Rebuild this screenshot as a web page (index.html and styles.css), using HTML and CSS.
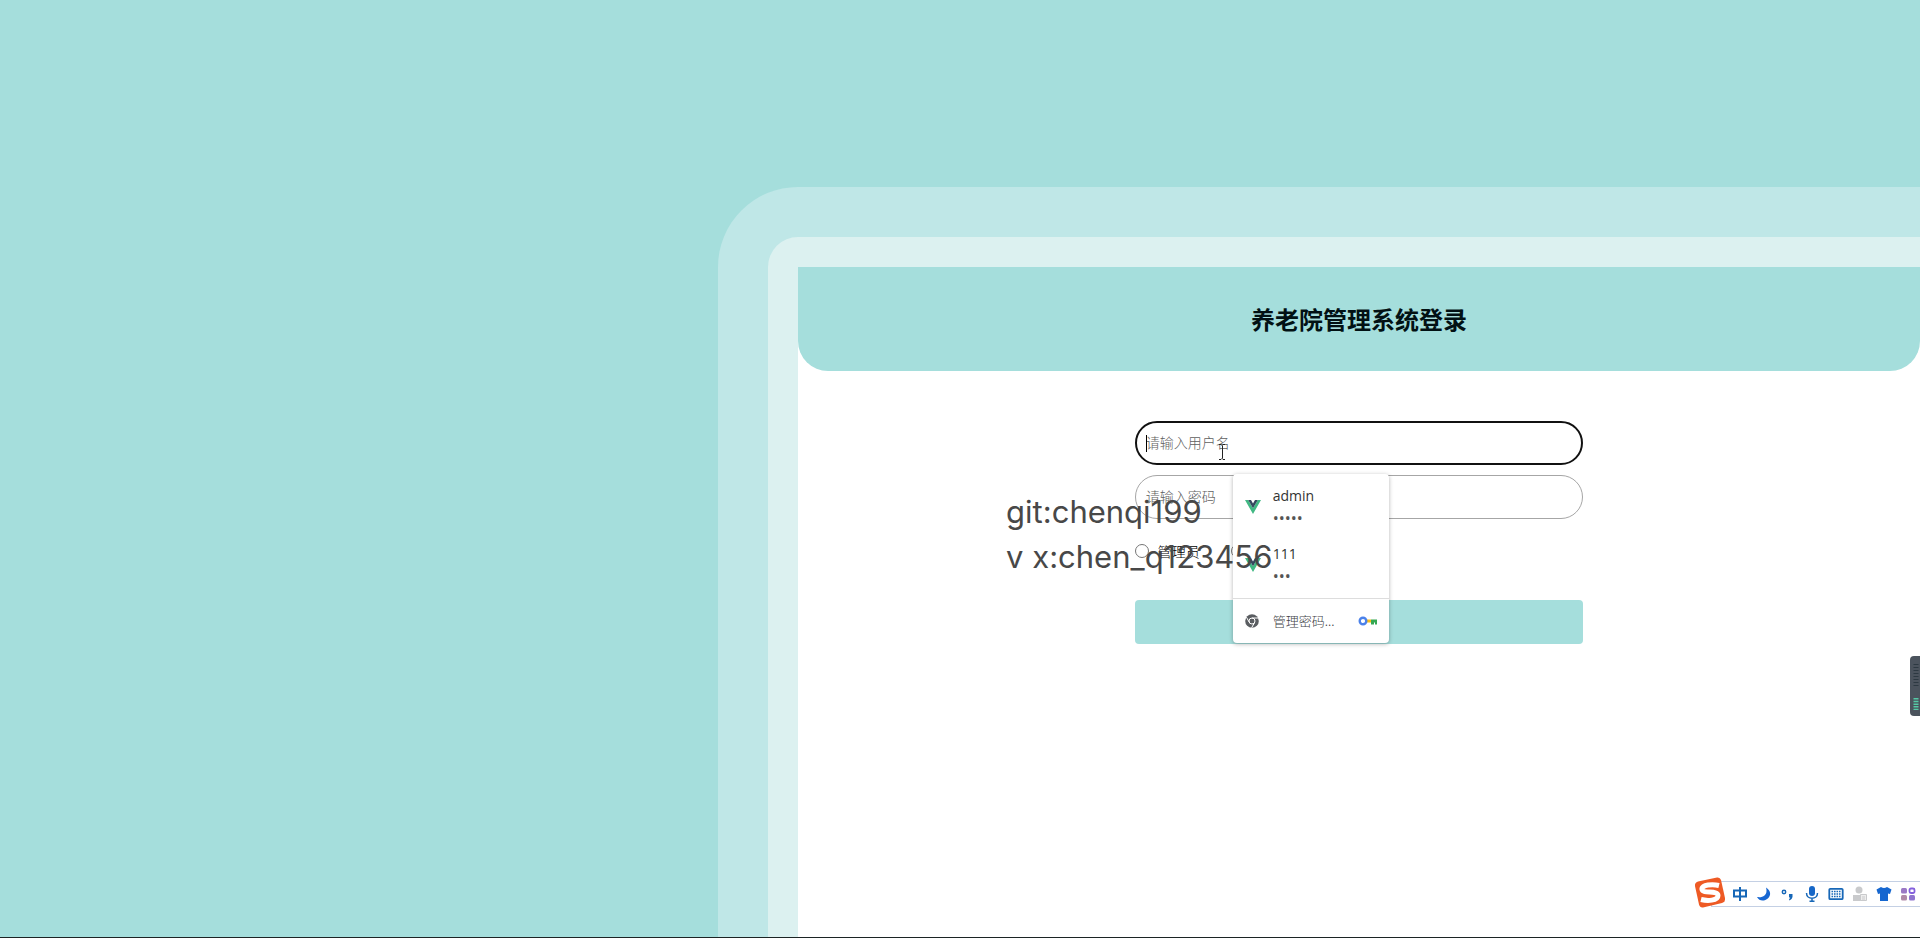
FILE: index.html
```html
<!DOCTYPE html>
<html lang="zh-CN">
<head>
<meta charset="utf-8">
<title>养老院管理系统登录</title>
<link rel="stylesheet" href="styles.css">
</head>
<body>
<main class="page">
  <div class="frame">
    <div class="bezel">
      <section class="panel">
        <header class="panel-header"><h1 class="title">养老院管理系统登录</h1></header>
        <form class="login">
          <div class="field">
            <input class="text-input text-input-active" type="text" placeholder="请输入用户名" aria-label="请输入用户名">
            <span class="caret"></span>
            <svg class="pointer" width="8" height="16" viewBox="0 0 8 16" fill="none" stroke="#222"><path d="M1 .5h2l1 1 1-1h2M4.500 1.500v13M1 15.500h2l1-1 1 1h2"/></svg>
            <div class="suggestions">
              <button class="account" type="button">
                <svg class="vue" width="16" height="14" viewBox="0 0 16 14"><path fill="#41b883" d="M0 0h3.200L8 8.300 12.800 0H16L8 14z"/><path fill="#35495e" d="M3.200 0H6l2 3.500L10 0h2.800L8 8.300z"/></svg>
                <span class="account-text"><span>admin</span><span class="dots">•••••</span></span>
              </button>
              <button class="account" type="button">
                <svg class="vue" width="16" height="14" viewBox="0 0 16 14"><path fill="#41b883" d="M0 0h3.200L8 8.300 12.800 0H16L8 14z"/><path fill="#35495e" d="M3.200 0H6l2 3.500L10 0h2.800L8 8.300z"/></svg>
                <span class="account-text"><span>111</span><span class="dots">•••</span></span>
              </button>
              <button class="manage" type="button">
                <svg width="14" height="14" viewBox="0 0 14 14"><circle cx="7" cy="7" r="6.800" fill="#5a5d61"/><g fill="none" stroke="#fff"><circle cx="7" cy="7" r="3"/><path d="M7 4h6M4.400 8.500l-3-5.300M9.600 8.500l-3 5.300"/></g></svg>
                <span class="manage-label">管理密码...</span>
                <svg width="19" height="10" viewBox="0 0 19 10"><path fill="#f9bc15" d="M8 3.500h5v3H8z"/><path fill="#34a853" d="M13 3.500h6v5h-2v-2h-1v2h-3z"/><circle cx="5" cy="5" r="3.300" fill="#fff" stroke="#4c82ea" stroke-width="2.400"/></svg>
              </button>
            </div>
          </div>
          <div class="field">
            <input class="text-input" type="password" placeholder="请输入密码" aria-label="请输入密码">
          </div>
          <div class="roles">
            <label class="role"><input class="radio" type="radio" name="role"><span>管理员</span></label>
            <input class="radio" type="radio" name="role">
          </div>
          <button class="submit" type="button"></button>
        </form>
        <p class="watermark"><span>git:chenqi199</span><span>v x:chen_q123456</span></p>
      </section>
    </div>
  </div>
</main>
<div class="edge-line"></div>
<div class="meter">
  <svg width="10" height="60" viewBox="0 0 10 60"><path d="M6 8v24" stroke="#2d3942" stroke-width="5" stroke-dasharray="1 2"/><path d="M6 42v12" stroke="#55c9a5" stroke-width="5" stroke-dasharray="1.500 1.200"/></svg>
</div>
<div class="ime">
  <svg class="ime-logo" width="32" height="32" viewBox="0 0 32 32"><path fill="#ee5a24" d="M4 4.500 23 .5q3-.5 4 2.500l4 18q.5 4-3 5L9 30.500q-3 .5-4-3L1 9q-.5-3.500 3-4.500z"/><path d="M25 8.500C19 7 7 7.500 8 12.500c1 4.500 16 .5 16 6 0 5.500-11 5.500-17 4" fill="none" stroke="#fff" stroke-width="5"/></svg>
  <div class="ime-tools">
    <svg viewBox="0 0 16 16"><path d="M2 4.500h12v6H2zM8 1v14" fill="none" stroke="#1667b7" stroke-width="2"/></svg>
    <svg viewBox="0 0 16 16"><path fill="#1767d2" d="M10 1.500c8 5 3 13-3.500 13Q3 14.500 1 11c7 1 11-3 9-9.500z"/></svg>
    <svg viewBox="0 0 16 16"><circle cx="4" cy="6" r="1.700" fill="none" stroke="#1767b7" stroke-width="1.500"/><path fill="#1767b7" d="M9 8h3.500v3q-.5 2.500-3 3.500l-.5-1 1.300-2H9z"/></svg>
    <svg viewBox="0 0 16 16"><rect x="5" y="0" width="6" height="10" rx="3" fill="#1767c7"/><path d="M2.500 7c0 7 11 7 11 0M8 12v4M5.500 15.300h5" fill="none" stroke="#1767b7" stroke-width="1.500"/></svg>
    <svg viewBox="0 0 16 16"><rect x="1.300" y="2.800" width="13.400" height="10.400" rx="1" fill="none" stroke="#1767b7" stroke-width="1.800"/><path d="M3.500 5.500h9M3.500 8h9M3.500 10.500h9" stroke="#1767b7" stroke-width="1.600" stroke-dasharray="1.600 .9"/></svg>
    <svg viewBox="0 0 16 16" fill="#c9cacc"><circle cx="7" cy="4" r="3.500"/><path d="M1 9h13v6H1z"/><path d="M8.500 8.500h6v6h-6z" fill="#eee" stroke="#c9cacc"/><path d="M10 10.500h3v1h-3zM10 12.500h3v1h-3z"/></svg>
    <svg viewBox="0 0 16 16"><path fill="#1667d0" d="M5 1q3 2 6 0l4.500 2.500L14 8l-2-.5V15H4V7.500L2 8 .5 3.500z"/></svg>
    <svg viewBox="0 0 16 16"><rect x="1" y="2" width="6" height="5.500" rx="1.500" fill="#9a78c5"/><rect x="9.500" y="2.500" width="5" height="4.500" rx="1.500" fill="none" stroke="#8460dd" stroke-width="1.800"/><rect x="1" y="9" width="6" height="5.500" rx="1.500" fill="#b08aa8"/><rect x="9" y="9" width="6" height="5.500" rx="1.500" fill="#8f74cf"/></svg>
  </div>
</div>
</body>
</html>
```
FILE: styles.css
```css
* { box-sizing: border-box; }
body {
  margin: 0;
  min-height: 100vh;
  display: flex;
  flex-direction: column;
  overflow-x: hidden;
  background: #a5dedc;
  font-family: "Open Sans", "Noto Sans CJK SC", sans-serif;
  font-size: 14px;
}
.page { flex: 1; display: flex; padding: 187px 0 0 37.4vw; }
.frame { flex: 1; display: flex; padding: 50px 0 0 50px; background: #bfe7e7; border-radius: 80px 0 0 0; }
.bezel { flex: 1; display: flex; padding: 30px 0 0 30px; background: #dcf1f0; border-radius: 30px 0 0 0; }
.panel { position: relative; flex: 1; background: #fff; }
.panel-header {
  display: flex;
  align-items: center;
  justify-content: center;
  height: 104px;
  background: #a5dedc;
  border-radius: 0 0 30px 30px;
}
.title { margin: 0; font: bold 24px/32px "Noto Sans CJK SC", sans-serif; color: #021114; }
.login { display: flex; flex-direction: column; width: 40%; margin: 50px auto 0; }
.field { position: relative; display: flex; margin-bottom: 10px; }
.text-input {
  width: 100%;
  height: 44px;
  padding: 0 10px 2px;
  border: 1px solid #a6a6a6;
  border-radius: 22px;
  background: #fff;
  font: 300 14px/20px "Noto Sans CJK SC", sans-serif;
  outline: none;
}
.text-input-active { border: 2px solid #111; padding: 0 9px 2px; }
.text-input::placeholder { color: #606060; opacity: 1; }
.caret { position: absolute; left: 11px; top: 14px; width: 1px; height: 17px; background: #000; }
.pointer { position: absolute; left: 83px; top: 23px; z-index: 3; }
.suggestions {
  position: absolute;
  z-index: 2;
  left: 98px;
  top: 53px;
  width: 156px;
  background: #fff;
  border-radius: 4px;
  box-shadow: 0 1px 4px rgba(0, 0, 0, .3);
}
.account, .manage {
  display: flex;
  align-items: center;
  width: 100%;
  padding: 0 12px;
  border: 0;
  background: none;
  color: #333;
  font: 14px/22px "Open Sans", sans-serif;
  text-align: left;
}
.account { height: 58px; padding-top: 7px; gap: 12px; }
.account-text { display: flex; flex-direction: column; }
.dots { color: #555; font-size: 16px; }
.manage {
  height: 45px;
  margin-top: 8px;
  gap: 14px;
  border-top: 1px solid #ddd;
  color: #3f4348;
  font: 300 13px/20px "Noto Sans CJK SC", sans-serif;
}
.manage-label { flex: 1; white-space: nowrap; }
.roles { display: flex; align-items: center; gap: 31px; height: 44px; font: 300 14px/20px "Noto Sans CJK SC", sans-serif; }
.role { display: flex; align-items: center; gap: 9px; }
.radio { appearance: none; width: 14px; height: 14px; margin: 0; border: 1px solid #767676; border-radius: 50%; background: #fff; }
.submit { height: 44px; margin-top: 27px; border: 0; border-radius: 4px; background: #a5dedc; }
.watermark {
  position: absolute;
  z-index: 4;
  left: 208px;
  top: 222px;
  display: flex;
  flex-direction: column;
  margin: 0;
  color: #484848;
  font: 31px/45px Inter, sans-serif;
}
.edge-line { height: 1px; background: #1c2424; }
.meter { position: absolute; right: 0; top: 656px; width: 10px; height: 60px; border-radius: 4px 0 0 4px; background: #4b535d; }
.ime { position: absolute; right: 0; bottom: 29px; display: flex; align-items: center; }
.ime-logo { z-index: 1; margin-right: -15px; }
.ime-tools {
  display: flex;
  align-items: center;
  gap: 8px;
  height: 26px;
  margin-top: 2px;
  padding: 0 4px 0 20px;
  border: 1px solid #c4d0e4;
  border-right: 0;
  background: #fff;
}
.ime-tools svg { width: 16px; height: 16px; }
```
